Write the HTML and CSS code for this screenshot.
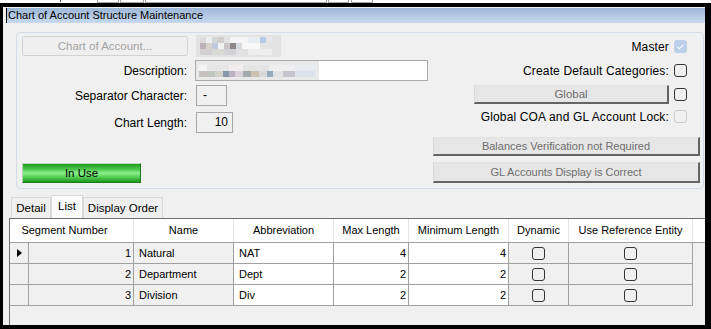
FILE: index.html
```html
<!DOCTYPE html>
<html lang="en">
<head>
  <meta charset="UTF-8">
  <title>Chart of Account Structure Maintenance</title>
  <link rel="stylesheet" href="styles.css">
</head>
<body>

<div class="screen">
  <div class="topstrip">
    <span class="tick"></span>
    <span class="tb tb1"></span>
    <span class="tb tb2"></span>
    <span class="tb tb3"></span>
    <span class="tb tb4"></span>
    <span class="tb tb5"></span>
  </div>

  <div class="window">
    <div class="titlebar">Chart of Account Structure Maintenance</div>

    <div class="group">
      <div class="left">
        <div class="row row-coa">
          <button class="btn-flat coa-btn">Chart of Account...</button>
          <div class="blur blur-coa">
            <div class="bl b1"></div>
            <div class="bl b2"></div>
            <div class="bl b3"></div>
          </div>
        </div>
        <div class="row row-field">
          <label class="lbl">Description:</label>
          <div class="textbox desc">
            <div class="blur blur-desc">
              <div class="bl d1"></div>
              <div class="bl d2"></div>
            </div>
          </div>
        </div>
        <div class="row row-field">
          <label class="lbl">Separator Character:</label>
          <div class="rbox sep">-</div>
        </div>
        <div class="row row-field row-len">
          <label class="lbl">Chart Length:</label>
          <div class="rbox len">10</div>
        </div>
        <button class="inuse">In Use</button>
      </div>

      <div class="right">
        <div class="chk-row master">
          <span>Master</span>
          <span class="chk chk-on">
            <svg width="13" height="13" viewBox="0 0 13 13"><path d="M3.5 6.8l2 2 4-4.3" fill="none" stroke="#fff" stroke-width="1.1"/></svg>
          </span>
        </div>
        <div class="chk-row create">
          <span>Create Default Categories:</span>
          <span class="chk"></span>
        </div>
        <div class="global-row">
          <button class="btn3d global">Global</button>
          <span class="chk"></span>
        </div>
        <div class="chk-row lock">
          <span>Global COA and GL Account Lock:</span>
          <span class="chk chk-off"></span>
        </div>
        <button class="btn3d wide balances">Balances Verification not Required</button>
        <button class="btn3d wide glok">GL Accounts Display is Correct</button>
      </div>
    </div>

    <div class="tabs">
      <div class="tab tab-detail">Detail</div>
      <div class="tab tab-list active">List</div>
      <div class="tab tab-order">Display Order</div>
    </div>

    <div class="grid">
      <div class="grid-row head">
        <div class="hc span2">Segment Number</div>
        <div class="hc">Name</div>
        <div class="hc">Abbreviation</div>
        <div class="hc">Max Length</div>
        <div class="hc">Minimum Length</div>
        <div class="hc">Dynamic</div>
        <div class="hc">Use Reference Entity</div>
        <div class="hc last"></div>
      </div>

      <div class="grid-row">
        <div class="c rh"><span class="cur"></span></div>
        <div class="c ro num">1</div>
        <div class="c ro">Natural</div>
        <div class="c">NAT</div>
        <div class="c num">4</div>
        <div class="c num">4</div>
        <div class="c ro mid"><span class="chk"></span></div>
        <div class="c ro mid"><span class="chk"></span></div>
        <div class="filler"></div>
      </div>

      <div class="grid-row">
        <div class="c rh"></div>
        <div class="c ro num">2</div>
        <div class="c ro">Department</div>
        <div class="c">Dept</div>
        <div class="c num">2</div>
        <div class="c num">2</div>
        <div class="c ro mid"><span class="chk"></span></div>
        <div class="c ro mid"><span class="chk"></span></div>
        <div class="filler"></div>
      </div>

      <div class="grid-row">
        <div class="c rh"></div>
        <div class="c ro num">3</div>
        <div class="c ro">Division</div>
        <div class="c">Div</div>
        <div class="c num">2</div>
        <div class="c num">2</div>
        <div class="c ro mid"><span class="chk"></span></div>
        <div class="c ro mid"><span class="chk"></span></div>
        <div class="filler"></div>
      </div>
    </div>
  </div>
</div>

</body>
</html>
```

FILE: styles.css
```css
body {
  margin: 0;
  padding: 0;
  background: #000;
  font-family: "Liberation Sans", Arial, sans-serif;
  font-size: 12px;
  color: #000;
}

.screen {
  width: 711px;
  height: 329px;
  background: #000;
  overflow: hidden;
}

/* thin strip of the parent toolbar above the window */
.topstrip {
  height: 3px;
  background: #fff;
  display: flex;
  align-items: flex-start;
}

.tick {
  width: 1px;
  height: 2px;
  background: #555;
  margin-left: 60px;
}

.tb {
  height: 2px;
  border: 1px solid #a8a8a8;
  border-top: none;
}

.tb1 { width: 20px; margin-left: 36px; }
.tb2 { width: 22px; margin-left: 1px; }
.tb3 { width: 180px; margin-left: 1px; }
.tb4 { width: 19px; margin-left: 1px; }
.tb5 { width: 20px; margin-left: 2px; }

.window {
  margin: 4px 6px 0 3px;
  height: 318px;
  background: #f0f0f0;
  display: flex;
  flex-direction: column;
}

.titlebar {
  margin: 1px 0 0 3px;
  height: 15px;
  line-height: 15px;
  padding-left: 1px;
  border-left: 1px solid #000;
  background: linear-gradient(#9db7d7, #c7d9ee);
  font-size: 11px;
  white-space: nowrap;
}

.group {
  margin: 9px 1px 0 13px;
  height: 157px;
  box-sizing: border-box;
  border: 1px solid #d4dde5;
  border-radius: 4px;
  display: flex;
  justify-content: space-between;
}

.left {
  padding: 3px 0 0 5px;
  display: flex;
  flex-direction: column;
  align-items: flex-start;
}

.row {
  display: flex;
  align-items: center;
}

.row-coa { height: 20px; }

.row-field {
  height: 21px;
  margin-top: 4px;
}

.row-len { margin-top: 6px; }

.lbl {
  width: 165px;
  text-align: right;
}

button {
  font-family: inherit;
  font-size: 11px;
  padding: 0;
  margin: 0;
}

.btn-flat {
  box-sizing: border-box;
  border: 1px solid #d2d2d2;
  border-radius: 3px;
  background: #efefef;
  color: #a3a3a3;
}

.coa-btn {
  width: 166px;
  height: 20px;
  font-size: 11.5px;
}

/* blurred (pixelated) values */
.blur {
  display: flex;
  flex-direction: column;
  justify-content: center;
}

.bl { height: 6px; }

.blur-coa {
  margin-left: 8px;
  width: 85px;
  height: 22px;
  background: #e3e3e3;
}

.blur-coa .bl { margin-left: 4px; width: 72px; }

.b1 {
  background: linear-gradient(90deg, #dcdcdc 0 6px, #eceef0 6px 12px, #d5d5d3 12px 18px, #d0cfcb 18px 24px, #e3e3e3 24px 30px, #f4f4f4 30px 48px, #e8ecf3 48px 60px, #b7c9e5 60px 66px, #e6e6e6 66px);
}

.b2 {
  background: linear-gradient(90deg, #beb2ba 0 6px, #d3d1c9 6px 12px, #c0c9d9 12px 18px, #f1f1f1 18px 24px, #c9c4c8 24px 30px, #8f8888 30px 36px, #d6d9dd 36px 42px, #f8f8f8 42px 60px, #e4e4e4 60px);
}

.b3 {
  background: linear-gradient(90deg, #d2d0d0 0 12px, #d8d8d4 12px 24px, #d0d2d6 24px 36px, #e0e0e0 36px 48px, #eeeeee 48px);
}

.textbox {
  margin-left: 8px;
  height: 21px;
  box-sizing: border-box;
  border: 1px solid #ababab;
  background: #fff;
}

.desc {
  width: 233px;
  display: flex;
}

.blur-desc {
  width: 123px;
  background: #e9e9e9;
}

.blur-desc .bl { margin-left: 3px; width: 116px; }

.d1 {
  background: linear-gradient(90deg, #f4f4f4 0 8px, #e6e6e6 8px 30px, #f2eef0 30px 44px, #e4e4e4 44px 70px, #eeeeee 70px 96px, #e8ecf2 96px);
}

.d2 {
  background: linear-gradient(90deg, #c6c0c0 0 8px, #c2c6c0 8px 16px, #d2d2ca 16px 24px, #8898ab 24px 30px, #b9b1c1 30px 36px, #d9d1d9 36px 44px, #a2aaaa 44px 52px, #c9c1b1 52px 60px, #d8d8d8 60px 68px, #92aabb 68px 74px, #e2e2e2 74px 84px, #c8c4cc 84px 96px, #dde2ea 96px);
}

.rbox {
  margin-left: 9px;
  height: 21px;
  line-height: 19px;
  box-sizing: border-box;
  border: 1px solid #a8a8a8;
  background: #f0f0f0;
}

.sep {
  width: 31px;
  padding-left: 6px;
}

.len {
  width: 37px;
  text-align: right;
  padding-right: 4px;
}

.inuse {
  margin-top: 30px;
  width: 119px;
  height: 20px;
  box-sizing: border-box;
  border: 1px solid #167d16;
  border-top-color: #c8d8c8;
  border-left-color: #b8d0b8;
  background: linear-gradient(#1e9c1e 0%, #4cc84c 30%, #8cef8c 50%, #55cf55 72%, #1c961c 100%);
  color: #000;
  font-size: 11.5px;
}

.right {
  padding: 7px 3px 0 0;
  display: flex;
  flex-direction: column;
  align-items: flex-end;
}

.chk-row {
  height: 13px;
  margin-right: 13px;
  display: flex;
  align-items: center;
  letter-spacing: 0.15px;
}

.chk-row .chk { margin-left: 5px; }

.create { margin-top: 11px; }
.lock { margin-top: 6px; }

.chk {
  display: inline-block;
  width: 13px;
  height: 13px;
  box-sizing: border-box;
  border: 1px solid #333;
  border-radius: 3px;
}

.chk-off { border-color: #cccccc; }

.chk-on {
  border: none;
  background: #bcd0e9;
}

.chk-on svg { display: block; }

.global-row {
  margin-top: 8px;
  margin-right: 13px;
  height: 19px;
  display: flex;
  align-items: center;
}

.global-row .chk { margin-left: 5px; }

.btn3d {
  box-sizing: border-box;
  background: #e6e6e6;
  border-style: solid;
  border-width: 1px 2px 2px 1px;
  border-color: #e2e2e2 #646464 #646464 #d8d8d8;
  color: #6d6d6d;
}

.global {
  width: 195px;
  height: 19px;
  font-size: 11.5px;
}

.wide { width: 267px; }

.balances {
  margin-top: 14px;
  height: 19px;
}

.glok {
  margin-top: 6px;
  height: 21px;
}

.tabs {
  margin: 6px 0 0 8px;
  height: 23px;
  display: flex;
  align-items: flex-end;
  font-size: 11.5px;
}

.tab {
  height: 21px;
  line-height: 20px;
  box-sizing: border-box;
  border: 1px solid #d9d9d9;
  border-bottom: none;
  text-align: center;
}

.tab-detail { width: 40px; }
.tab-list { width: 32px; }
.tab-order { width: 80px; }

.tab.active {
  height: 23px;
  line-height: 21px;
  background: #fbfbfb;
}

.grid {
  margin-left: 6px;
  flex: 1;
  border-left: 1px solid #6f6f6f;
  border-top: 1px solid #6f6f6f;
  background: #f0f0f0;
  font-size: 11px;
}

.grid-row {
  display: grid;
  grid-template-columns: 19px 105px 100px 100px 75px 100px 60px 124px 1fr;
  height: 21px;
}

.grid-row.head {
  height: 23px;
  background: #fff;
  border-bottom: 1px solid #a0a0a0;
}

.hc {
  text-align: center;
  line-height: 22px;
  border-right: 1px solid #e3e3e3;
  white-space: nowrap;
}

.hc.span2 {
  grid-column: span 2;
  padding-right: 14px;
}

.hc.last { border-right: none; }

.c {
  box-sizing: border-box;
  border-right: 1px solid #a0a0a0;
  border-bottom: 1px solid #a0a0a0;
  background: #fff;
  line-height: 20px;
  padding-left: 5px;
  white-space: nowrap;
}

.c.ro { background: #f0f0f0; }

.c.num {
  text-align: right;
  padding: 0 2px 0 0;
}

.c.mid {
  padding: 0;
  display: flex;
  align-items: center;
  justify-content: center;
}

.c.rh {
  background: #f0f0f0;
  padding: 0;
  display: flex;
  align-items: center;
  justify-content: center;
}

.cur {
  width: 0;
  height: 0;
  border-top: 4px solid transparent;
  border-bottom: 4px solid transparent;
  border-left: 5px solid #000;
}
```
